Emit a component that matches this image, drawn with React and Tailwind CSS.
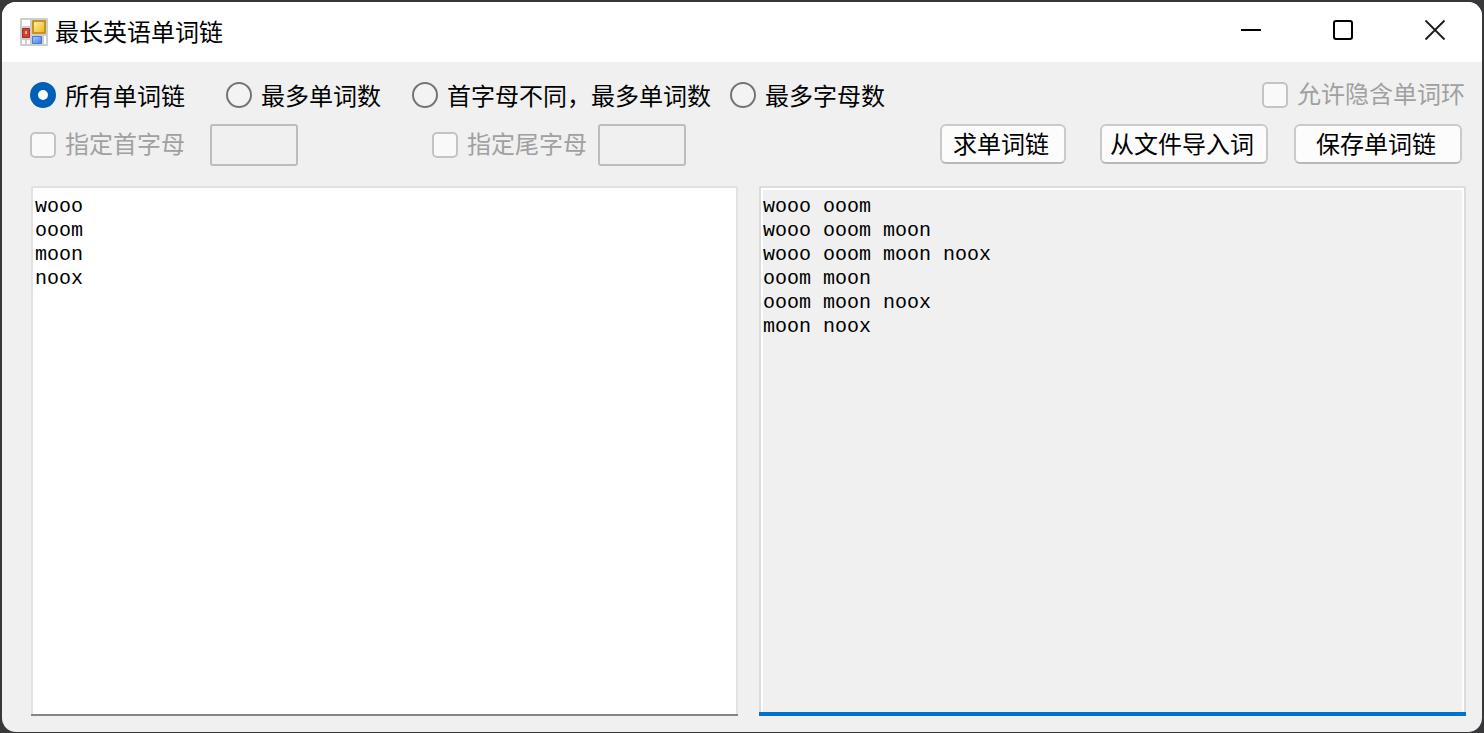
import { useState } from "react";

const modes = [
  { id: "all", label: "所有单词链", className: "mr-[41px]" },
  { id: "words", label: "最多单词数", className: "mr-[31px]" },
  { id: "distinct", label: "首字母不同，最多单词数", className: "mr-[19px]" },
  { id: "letters", label: "最多字母数", className: "" },
];

const chains = [
  "wooo ooom",
  "wooo ooom moon",
  "wooo ooom moon noox",
  "ooom moon",
  "ooom moon noox",
  "moon noox",
];

function AppIcon() {
  return (
    <svg width="28" height="28" viewBox="0 0 28 28" aria-hidden="true">
      <defs>
        <linearGradient id="gold" x1="0" y1="0" x2="1" y2="1">
          <stop offset="0" stopColor="#ffeea0" />
          <stop offset="1" stopColor="#f2b822" />
        </linearGradient>
        <linearGradient id="blue" x1="0" y1="0" x2="1" y2="1">
          <stop offset="0" stopColor="#a5c8fd" />
          <stop offset="1" stopColor="#4a82e2" />
        </linearGradient>
      </defs>
      <rect width="28" height="28" rx="1" fill="#cdcdcd" />
      <rect x="2" y="2" width="8" height="6" fill="#fff" />
      <rect x="2" y="22" width="3" height="4" fill="#fff" />
      <rect x="7" y="22" width="3" height="4" fill="#fff" />
      <rect x="24" y="18" width="2" height="8" fill="#fff" />
      <rect x="12" y="2" width="14" height="14" rx="1" fill="#c3951a" />
      <rect x="14" y="4" width="10" height="10" rx="1" fill="url(#gold)" />
      <rect x="2" y="10" width="8" height="10" rx="1" fill="#ab2a20" />
      <rect x="3" y="11" width="6" height="8" rx="1" fill="#cb4237" />
      <rect x="5" y="13" width="2" height="3" fill="#f0a59c" />
      <rect x="12" y="18" width="10" height="8" rx="1" fill="#4878d4" />
      <rect x="13" y="19" width="8" height="6" rx="1" fill="url(#blue)" />
    </svg>
  );
}

function TitleBar() {
  return (
    <header className="flex h-[60px] shrink-0 items-center bg-white pl-[18px] pr-9">
      <AppIcon />
      <h1 className="ml-[7px] pb-0.5 text-2xl leading-8">最长英语单词链</h1>
      <div className="ml-auto flex items-center gap-[70px] pb-1">
        <button type="button" aria-label="最小化">
          <svg width="22" height="22" viewBox="0 0 22 22" className="block">
            <path d="M1 11h20" stroke="#000" strokeWidth="2" />
          </svg>
        </button>
        <button type="button" aria-label="最大化">
          <svg width="22" height="22" viewBox="0 0 22 22" className="block">
            <rect x="2" y="2" width="18" height="18" rx="2" fill="none" stroke="#000" strokeWidth="2" />
          </svg>
        </button>
        <button type="button" aria-label="关闭">
          <svg width="22" height="22" viewBox="0 0 22 22" className="block">
            <path d="M1.500 1.500l19 19M20.500 1.500l-19 19" stroke="#1a1a1a" strokeWidth="1.800" />
          </svg>
        </button>
      </div>
    </header>
  );
}

function DisabledCheck({ label }) {
  return (
    <label className="flex items-center gap-[9px] whitespace-nowrap text-[#a0a0a0]">
      <input
        type="checkbox"
        disabled
        className="size-[26px] appearance-none rounded-[5px] border-2 border-[#c4c4c4] bg-[#f9f9f9]"
      />
      <span className="leading-[22px] pb-1">{label}</span>
    </label>
  );
}

function LetterInput({ label }) {
  return (
    <input
      type="text"
      disabled
      aria-label={label}
      className="h-[42px] w-[88px] rounded-[3px] border-2 border-[#bbbdc0] bg-[#f0f0f0] px-1"
    />
  );
}

function ActionButton({ children, className }) {
  return (
    <button
      type="button"
      className={
        "h-10 whitespace-nowrap rounded-md border-2 border-[#cacaca] border-b-[#b8b8b8] bg-[#fcfcfc] pb-0.5 pr-1 leading-8 " +
        className
      }
    >
      {children}
    </button>
  );
}

function App() {
  const [mode, setMode] = useState("all");
  const [words, setWords] = useState("wooo\nooom\nmoon\nnoox");

  return (
    <div className="h-screen bg-[#38373a] p-0.5 pb-px font-['Noto_Sans_CJK_SC',sans-serif] text-2xl leading-[26px] text-black">
      <div className="flex h-full flex-col overflow-hidden rounded-[14px] bg-[#f0f0f0]">
        <TitleBar />
        <main className="flex flex-1 flex-col pb-4 pl-7 pr-4 pt-5">
          <div className="flex items-center">
            {modes.map((m) => (
              <label
                key={m.id}
                className={"flex items-center gap-[9px] whitespace-nowrap " + m.className}
              >
                <input
                  type="radio"
                  name="mode"
                  checked={mode === m.id}
                  onChange={() => setMode(m.id)}
                  className="size-[26px] appearance-none rounded-full border-2 border-[#747474] bg-[#f3f3f3] checked:border-8 checked:border-[#005fb8] checked:bg-white"
                />
                {m.label}
              </label>
            ))}
            <div className="ml-auto mr-px">
              <DisabledCheck label="允许隐含单词环" />
            </div>
          </div>

          <div className="mt-4 flex items-center">
            <DisabledCheck label="指定首字母" />
            <div className="ml-[25px] mr-[134px]">
              <LetterInput label="首字母" />
            </div>
            <DisabledCheck label="指定尾字母" />
            <div className="ml-[11px]">
              <LetterInput label="尾字母" />
            </div>
            <div className="ml-auto mr-1 flex self-start">
              <ActionButton className="mr-[34px] w-[126px]">求单词链</ActionButton>
              <ActionButton className="mr-[26px] w-[168px]">从文件导入词</ActionButton>
              <ActionButton className="w-[168px]">保存单词链</ActionButton>
            </div>
          </div>

          <div className="ml-px mt-5 flex flex-1 gap-[21px] font-['Liberation_Mono',monospace] text-xl leading-6">
            <div className="flex min-w-0 flex-1 border-b-2 border-[#868686]">
              <textarea
                aria-label="单词"
                spellCheck={false}
                value={words}
                onChange={(e) => setWords(e.target.value)}
                className="min-w-0 flex-1 resize-none rounded-t-xs border-2 border-b-0 border-[#e2e2e2] bg-white px-0.5 py-[7px] outline-none"
              />
            </div>
            <div className="flex min-w-0 flex-1 border-b-4 border-[#0071cd]">
              <textarea
                aria-label="单词链"
                readOnly
                value={chains.join("\n")}
                className="min-w-0 flex-1 resize-none rounded-t-xs border-2 border-b-0 border-[#dcdcdc] bg-[#f0f0f0] px-0.5 py-[7px] shadow-[inset_2px_2px_0_#fff,inset_-2px_0_0_#fff] outline-none"
              />
            </div>
          </div>
        </main>
      </div>
    </div>
  );
}

export default App;
